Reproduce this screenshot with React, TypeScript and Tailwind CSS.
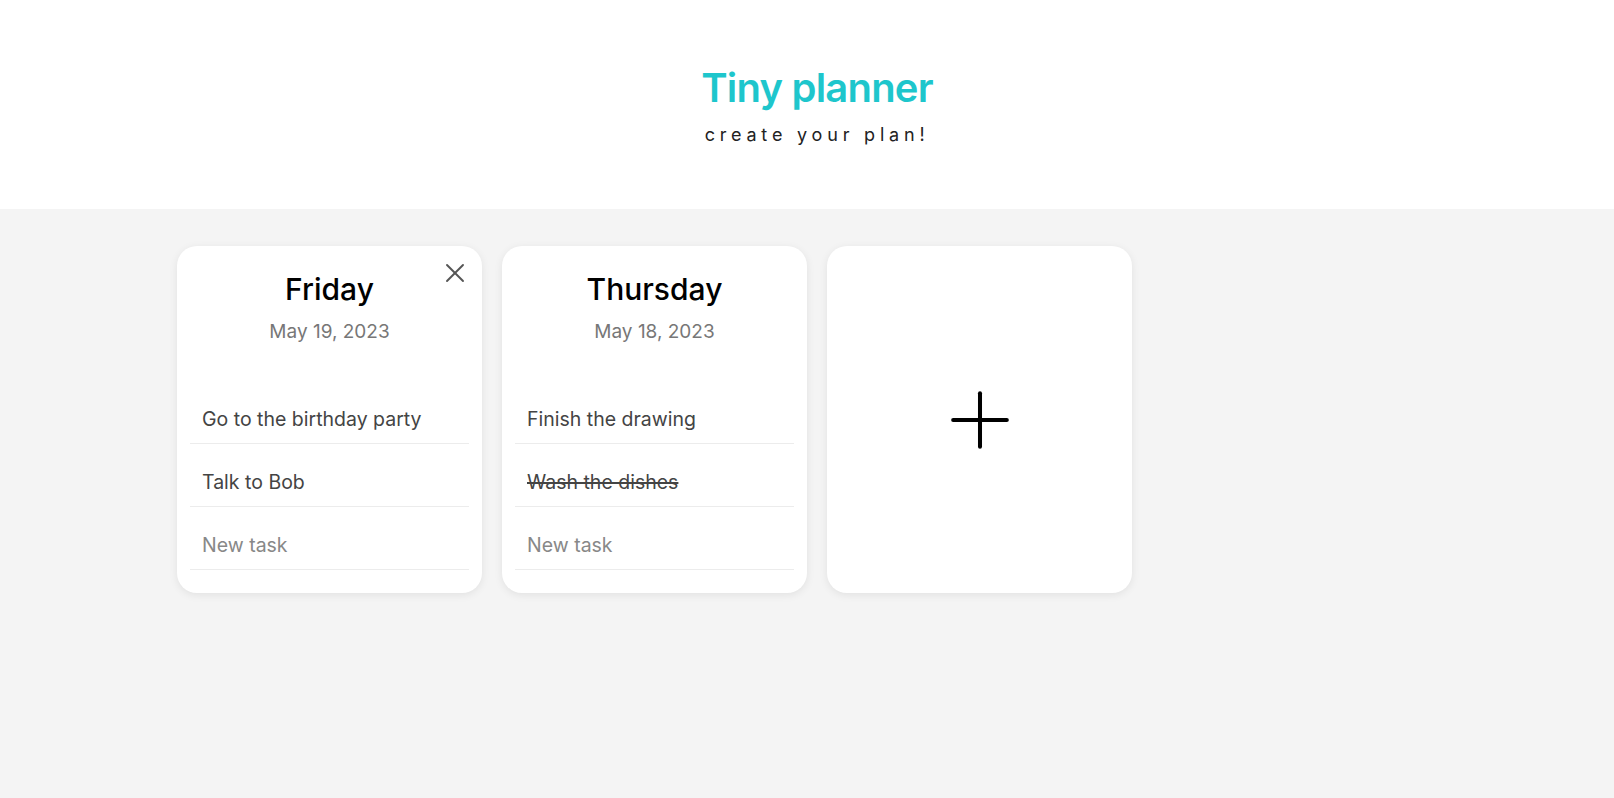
import { Plus, X } from 'lucide-react';

type Task = { text: string; done?: boolean };
type Day = { name: string; date: string; tasks: Task[]; closable?: boolean };

const DAYS: Day[] = [
  { name: 'Friday', date: 'May 19, 2023', closable: true, tasks: [{ text: 'Go to the birthday party' }, { text: 'Talk to Bob' }] },
  { name: 'Thursday', date: 'May 18, 2023', tasks: [{ text: 'Finish the drawing' }, { text: 'Wash the dishes', done: true }] },
];

function DayCard({ day }: { day: Day }) {
  return (
    <div className="relative w-[305px] h-[347px] bg-white rounded-[20px] shadow-[0_2px_8px_rgba(0,0,0,0.08)] px-[13px] pt-[24px]">
      {day.closable && (
        <button className="absolute top-[11px] right-[11px] text-[#555]">
          <X size={32} strokeWidth={1.4} />
        </button>
      )}
      <div className="text-center">
        <h2 className="text-[30px] leading-[38px] font-medium text-black">{day.name}</h2>
        <p className="mt-[12px] text-[19px] leading-[24px] text-[#777]">{day.date}</p>
      </div>
      <div className="mt-[37px]">
        {day.tasks.map(t => (
          <div key={t.text} className="pt-[26px] pb-[12px] px-[12px] border-b border-[#ececec]">
            <span className={`block text-[19.5px] leading-[24px] text-[#444] ${t.done ? 'line-through decoration-[1.5px]' : ''}`}>{t.text}</span>
          </div>
        ))}
        <div className="pt-[26px] pb-[12px] px-[12px] border-b border-[#ececec]">
          <span className="block text-[19.5px] leading-[24px] text-[#888]">New task</span>
        </div>
      </div>
    </div>
  );
}

export default function App() {
  return (
    <div className="min-h-screen bg-[#f4f4f4]" style={{ fontFamily: 'Inter, "Noto Sans", sans-serif' }}>
      <header className="h-[209px] bg-white flex flex-col items-center pt-[64px] pl-[20px]">
        <h1 className="text-[40px] leading-[48px] font-semibold text-[#1ec6cc] tracking-[-0.8px]">Tiny planner</h1>
        <p className="mt-[12px] text-[18px] leading-[22px] text-[#222] tracking-[4.8px]">create your plan!</p>
      </header>
      <main className="flex gap-[20px] pl-[177px] pt-[37px]">
        {DAYS.map(d => <DayCard key={d.name} day={d} />)}
        <button className="w-[305px] h-[347px] bg-white rounded-[20px] shadow-[0_2px_8px_rgba(0,0,0,0.08)] flex items-center justify-center">
          <Plus size={92} strokeWidth={1.05} className="text-black" />
        </button>
      </main>
    </div>
  );
}
